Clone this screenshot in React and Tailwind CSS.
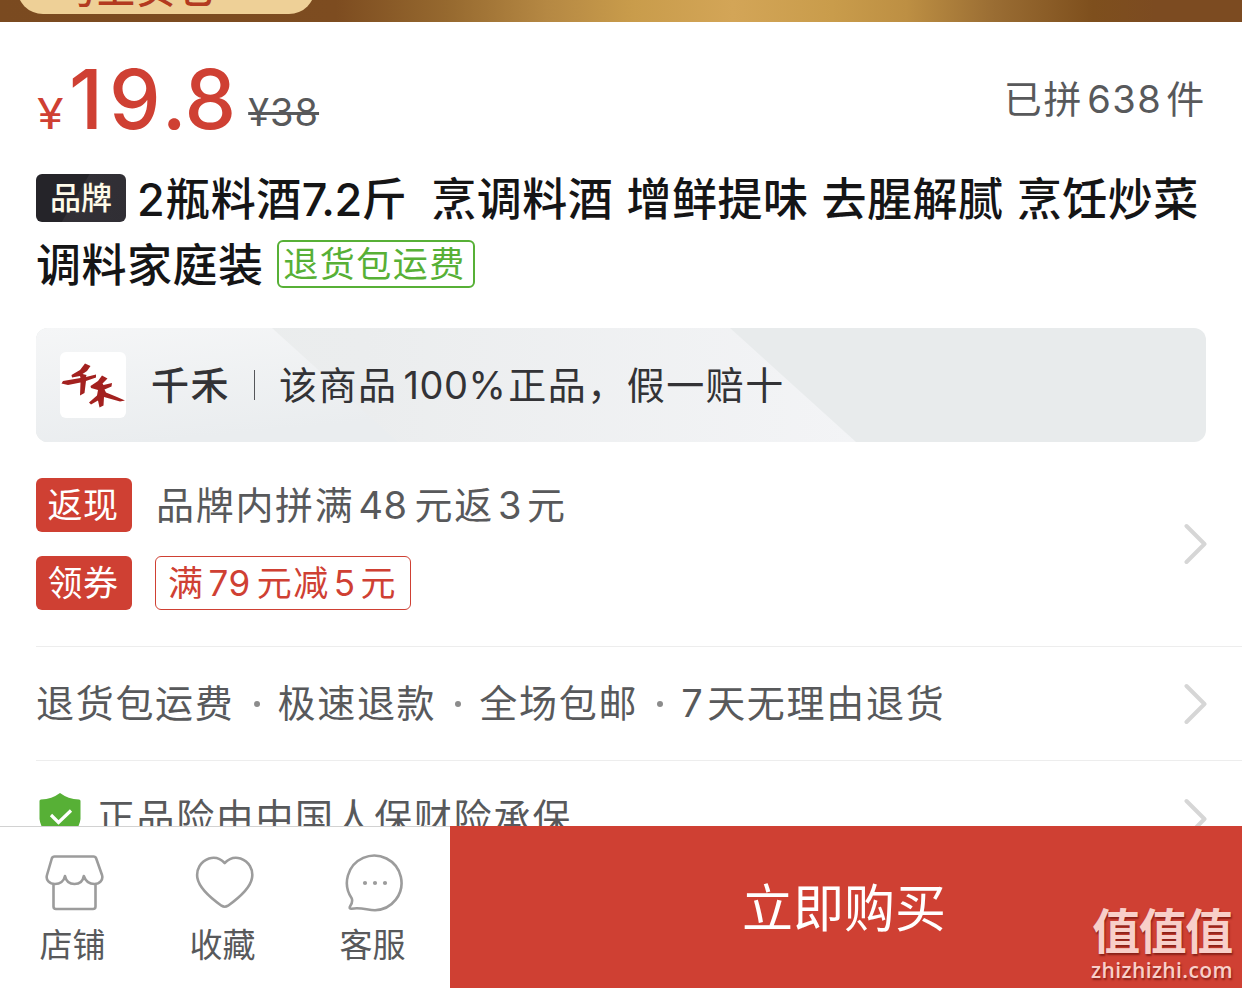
import React from 'react';

const SERVICES = ['退货包运费', '极速退款', '全场包邮'];

const Chevron = () => (
  <svg className="w-6 h-[42px] shrink-0" viewBox="0 0 24 42" fill="none">
    <path d="M2.5 3 L20.5 21 L2.5 39" stroke="#d6d6d6" strokeWidth="4" strokeLinecap="round" strokeLinejoin="round" />
  </svg>
);

const Num = ({ children, className = 'mx-1.5' }) => (
  <span className={`tracking-[0.5px] ${className}`}>{children}</span>
);

const RedTag = ({ children }) => (
  <span className="flex items-center justify-center w-24 h-[54px] pt-px pr-0.5 rounded-md bg-[#cf4033] text-white text-[35px] tracking-[0.5px] leading-none">
    {children}
  </span>
);

const ShopIcon = () => (
  <svg className="w-[60px] h-[60px]" viewBox="0 0 60 60" fill="none" stroke="#9c9c9c" strokeWidth="2.6" strokeLinejoin="round" strokeLinecap="round">
    <path d="M9.5 2.5 H48.5 Q50.5 2.5 51.2 4.5 L57 21 C58.5 26 54.5 30 49.5 30 C44 30 40.5 27 38.8 22 C38 27 34.5 30 29.5 30 C24.5 30 21 27 20 22 C19 27 15 30 10 30 C4.5 30 0.5 26 2 21 L6.8 4.5 Q7.5 2.5 9.5 2.5 Z" />
    <path d="M8.5 31 V52.5 Q8.5 55 11 55 H48 Q50.5 55 50.5 52.5 V31" />
  </svg>
);

const HeartIcon = () => (
  <svg className="w-[60px] h-[60px]" viewBox="0 0 60 60" fill="none" stroke="#9c9c9c" strokeWidth="2.6" strokeLinejoin="round">
    <path d="M29.7 9 C25 4 19 3 14 4.5 C5.5 7.5 1 15.5 2.4 24 C4 33 15 43.5 26.5 51.7 Q29.7 53.8 33 51.7 C44.5 43.5 55.5 33 57 24 C58.5 15.5 54 7.5 45.5 4.5 C40.5 3 34.5 4 29.7 9 Z" />
  </svg>
);

const ChatIcon = () => (
  <svg className="w-[60px] h-[60px]" viewBox="0 0 60 60" fill="none" stroke="#9c9c9c" strokeWidth="2.6" strokeLinejoin="round">
    <path d="M6.8 44.5 A27.3 27.3 0 1 1 30 56.2 C22 56 16 53 6.5 54.7 Q4 54.8 5 52.5 Q8 48.5 6.8 44.5 Z" />
    <g fill="#9c9c9c" stroke="none">
      <circle cx="20" cy="29" r="2.1" />
      <circle cx="30" cy="29" r="2.1" />
      <circle cx="40" cy="29" r="2.1" />
    </g>
  </svg>
);

const ShieldIcon = () => (
  <svg className="w-[42px] h-12 shrink-0" viewBox="0 0 42 48">
    <path d="M21 0 Q29 6 40 6.5 Q41.5 6.6 41.5 8 V26 Q40 40 21 48 Q2 40 0.5 26 V8 Q0.5 6.6 2 6.5 Q13 6 21 0 Z" fill="#57b036" />
    <path d="M12 22 L19.5 29.5 L32 17.5" fill="none" stroke="#fff" strokeWidth="3.2" />
  </svg>
);

const BrandLogo = () => (
  <svg className="w-[66px] h-[66px] shrink-0 rounded-md bg-white" viewBox="0 0 66 66" fill="#a3211f">
    <path d="M25 11.5 L30.5 14 L27 19 L22.5 22 L26.5 23 L26 25 L36 22.5 L36 25.5 L26 29 L24.5 41 L20 43.5 L20.5 30.5 L8 33 L1.5 31.5 L3 29 L20.5 26 L20 24 L12 25.5 L11.5 23 L20 18 Z" />
    <path d="M42 23.5 L47.5 26.5 L42.5 31.5 L43.5 33 L52 31 L51.5 34.5 L44.5 37.5 L46 40.5 L57 45 L65 48.5 L60 49.5 L44 45 L43.5 53.5 L39.5 55.5 L38 48.5 L31 52.5 L29 50.5 L37 43.5 L38 38 L31 36 L30.5 34 L38 29 Z" />
  </svg>
);

const ACTIONS = [
  { label: '店铺', Icon: ShopIcon },
  { label: '收藏', Icon: HeartIcon },
  { label: '客服', Icon: ChatIcon }
];

export default function App() {
  return (
    <div className="relative flex flex-col w-[1242px] h-[988px] overflow-hidden bg-white text-[#58595b] font-['Inter','Noto_Sans_CJK_SC',sans-serif]">
      {/* Promo banner, cut off at the top */}
      <div className="flex items-end h-[22px] shrink-0 overflow-hidden bg-[linear-gradient(90deg,#7a4a20_0%,#7d4c20_27%,#96692f_36%,#b58843_44%,#c99c4b_51%,#d3a557_59%,#c99c4b_67%,#bd8f43_73%,#9a6d33_80%,#7e4f1d_88%,#7c4b21_93%,#7c4b21_100%)]">
        <div className="flex items-end w-[298px] h-16 ml-[17px] mb-2 rounded-[26px] bg-[#eed097] pl-10 text-[#b33a20] text-[38px] font-medium leading-[50px] tracking-[2px]">
          <span>马上买它</span>
        </div>
      </div>

      {/* Price */}
      <div className="flex justify-between h-[138px] shrink-0 pl-[37px] pr-9">
        <div className="flex items-baseline text-[#cf4033] leading-[156px] h-[138px]">
          <span className="text-[42px] w-[25px] origin-left scale-x-115">¥</span>
          <span className="text-[82px] font-medium ml-[7px]">
            <span className="tracking-[6px]">1</span>
            <span className="tracking-[1px]">9</span>
            <span>.8</span>
          </span>
          <span className="relative -top-[3px] ml-3 text-[38px] text-[#58595b] tracking-[1px] line-through decoration-[3px]">¥38</span>
        </div>
        <div className="text-[38px] leading-[154px] tracking-[1.7px]">
          已拼<span className="mx-1 tracking-[1.5px]">638</span>件
        </div>
      </div>

      {/* Title */}
      <div className="h-[168px] shrink-0 pl-9 pt-[5px] text-[#151516] text-[45px] font-medium whitespace-nowrap">
        <div className="flex items-center h-[66px]">
          <span className="flex items-center justify-center w-[90px] h-12 mr-[11px] pt-px rounded-md bg-[linear-gradient(120deg,#252429_45%,#323036_46%,#302e34_100%)] text-[#fffbe9] text-[31px] font-medium">品牌</span>
          <span className="flex pt-[3px] tracking-[0.5px]">
            <span>2瓶料酒<span className="tracking-[-0.5px]">7.2</span>斤</span>
            <span className="ml-6 [word-spacing:0.7px]">烹调料酒 增鲜提味 去腥解腻 烹饪炒菜</span>
          </span>
        </div>
        <div className="flex items-center h-[66px]">
          <span className="pt-[3px] tracking-[0.5px]">调料家庭装</span>
          <span className="flex items-center justify-center w-[198px] h-12 ml-[13px] pr-0.5 rounded-md border-2 border-[#57b036] text-[#57b036] text-[35px] font-normal tracking-[1.5px]">退货包运费</span>
        </div>
      </div>

      {/* Brand guarantee */}
      <div className="relative flex items-center h-[114px] shrink-0 mx-9 px-6 rounded-xl overflow-hidden bg-[#e8ebec] text-[#333336] text-[38px]">
        <svg className="absolute inset-0 w-full h-full" viewBox="0 0 1170 114" preserveAspectRatio="none">
          <defs>
            <linearGradient id="sheen" x1="0" y1="0" x2="0.3" y2="1">
              <stop offset="0" stopColor="#f5f6f7" />
              <stop offset="1" stopColor="#eaedef" />
            </linearGradient>
            <linearGradient id="band" x1="0" y1="0" x2="1" y2="0">
              <stop offset="0" stopColor="#e9eceb" />
              <stop offset="0.4" stopColor="#ebedee" />
              <stop offset="1" stopColor="#f3f4f6" />
            </linearGradient>
          </defs>
          <path d="M0 0 H694 L820 114 H0 Z" fill="url(#band)" />
          <path d="M0 0 H236 L362 114 H0 Z" fill="url(#sheen)" />
        </svg>
        <div className="relative flex items-center whitespace-nowrap">
          <BrandLogo />
          <span className="ml-[25px] font-medium tracking-[1.5px]">千禾</span>
          <span className="w-px h-[30px] mx-6 bg-[#55565a]" />
          <span className="tracking-[1.5px]">该商品<Num className="ml-1.5 mr-0.5">100%</Num>正品，假一赔十</span>
        </div>
      </div>

      {/* Promotions */}
      <div className="flex items-center justify-between h-[205px] shrink-0 ml-9 pr-[34px] border-b border-[#ededed]">
        <div className="flex flex-col gap-6">
          <div className="flex items-center">
            <RedTag>返现</RedTag>
            <span className="ml-6 text-[38px] leading-[54px] tracking-[1.7px]">品牌内拼满<Num className="ml-1 mr-[7px]">48</Num>元返<Num className="ml-1 mr-[5px]">3</Num>元</span>
          </div>
          <div className="flex items-center">
            <RedTag>领券</RedTag>
            <span className="flex items-center w-[256px] h-[54px] ml-[23px] pl-3 pt-px rounded-md border border-[#cf4033] text-[#cf4033] text-[35px] tracking-[1.5px] whitespace-nowrap">满<Num className="ml-1 mr-1.5">79</Num>元减<Num className="ml-1 mr-[5px]">5</Num>元</span>
          </div>
        </div>
        <Chevron />
      </div>

      {/* Services */}
      <div className="flex items-center justify-between h-[114px] shrink-0 ml-9 pr-[34px] border-b border-[#ededed]">
        <div className="flex items-center text-[38px] tracking-[1.7px]">
          {SERVICES.map((s) => (
            <React.Fragment key={s}>
              <span>{s}</span>
              <span className="w-1.5 h-1.5 ml-[19px] mr-[18px] rounded-full bg-[#8c8c8c]" />
            </React.Fragment>
          ))}
          <span><Num className="mr-1">7</Num>天无理由退货</span>
        </div>
        <Chevron />
      </div>

      {/* Insurance row, runs under the bottom bar */}
      <div className="flex items-center justify-between h-[115px] shrink-0 ml-9 pr-[34px]">
        <div className="flex items-center pb-[3px] text-[38px] tracking-[1.6px]">
          <div className="ml-[3px]"><ShieldIcon /></div>
          <span className="ml-4">正品险由中国人保财险承保</span>
        </div>
        <Chevron />
      </div>

      {/* Bottom bar */}
      <div className="absolute bottom-0 left-0 flex w-full h-[162px]">
        <div className="flex w-[450px] bg-white border-t border-[#d2d2d2]">
          {ACTIONS.map(({ label, Icon }) => (
            <div key={label} className="flex flex-col items-center w-[150px] pt-[27px]">
              <Icon />
              <span className="mt-[7px] -ml-[5px] text-[33px] leading-[48px]">{label}</span>
            </div>
          ))}
        </div>
        <div className="flex items-center justify-center flex-1 pt-[5px] pr-1 bg-[#cf4033] text-white text-[51px]">立即购买</div>
        <div className="absolute right-[9px] bottom-1.5 flex flex-col items-center text-[#f8cfc9] [text-shadow:1px_2px_2px_#8a2018]">
          <span className="text-[48px] font-bold leading-[52px] tracking-[-1.5px]">值值值</span>
          <span className="text-[21px] leading-6 font-['Open_Sans',sans-serif] font-semibold tracking-[0.4px]">zhizhizhi.com</span>
        </div>
      </div>
    </div>
  );
}
